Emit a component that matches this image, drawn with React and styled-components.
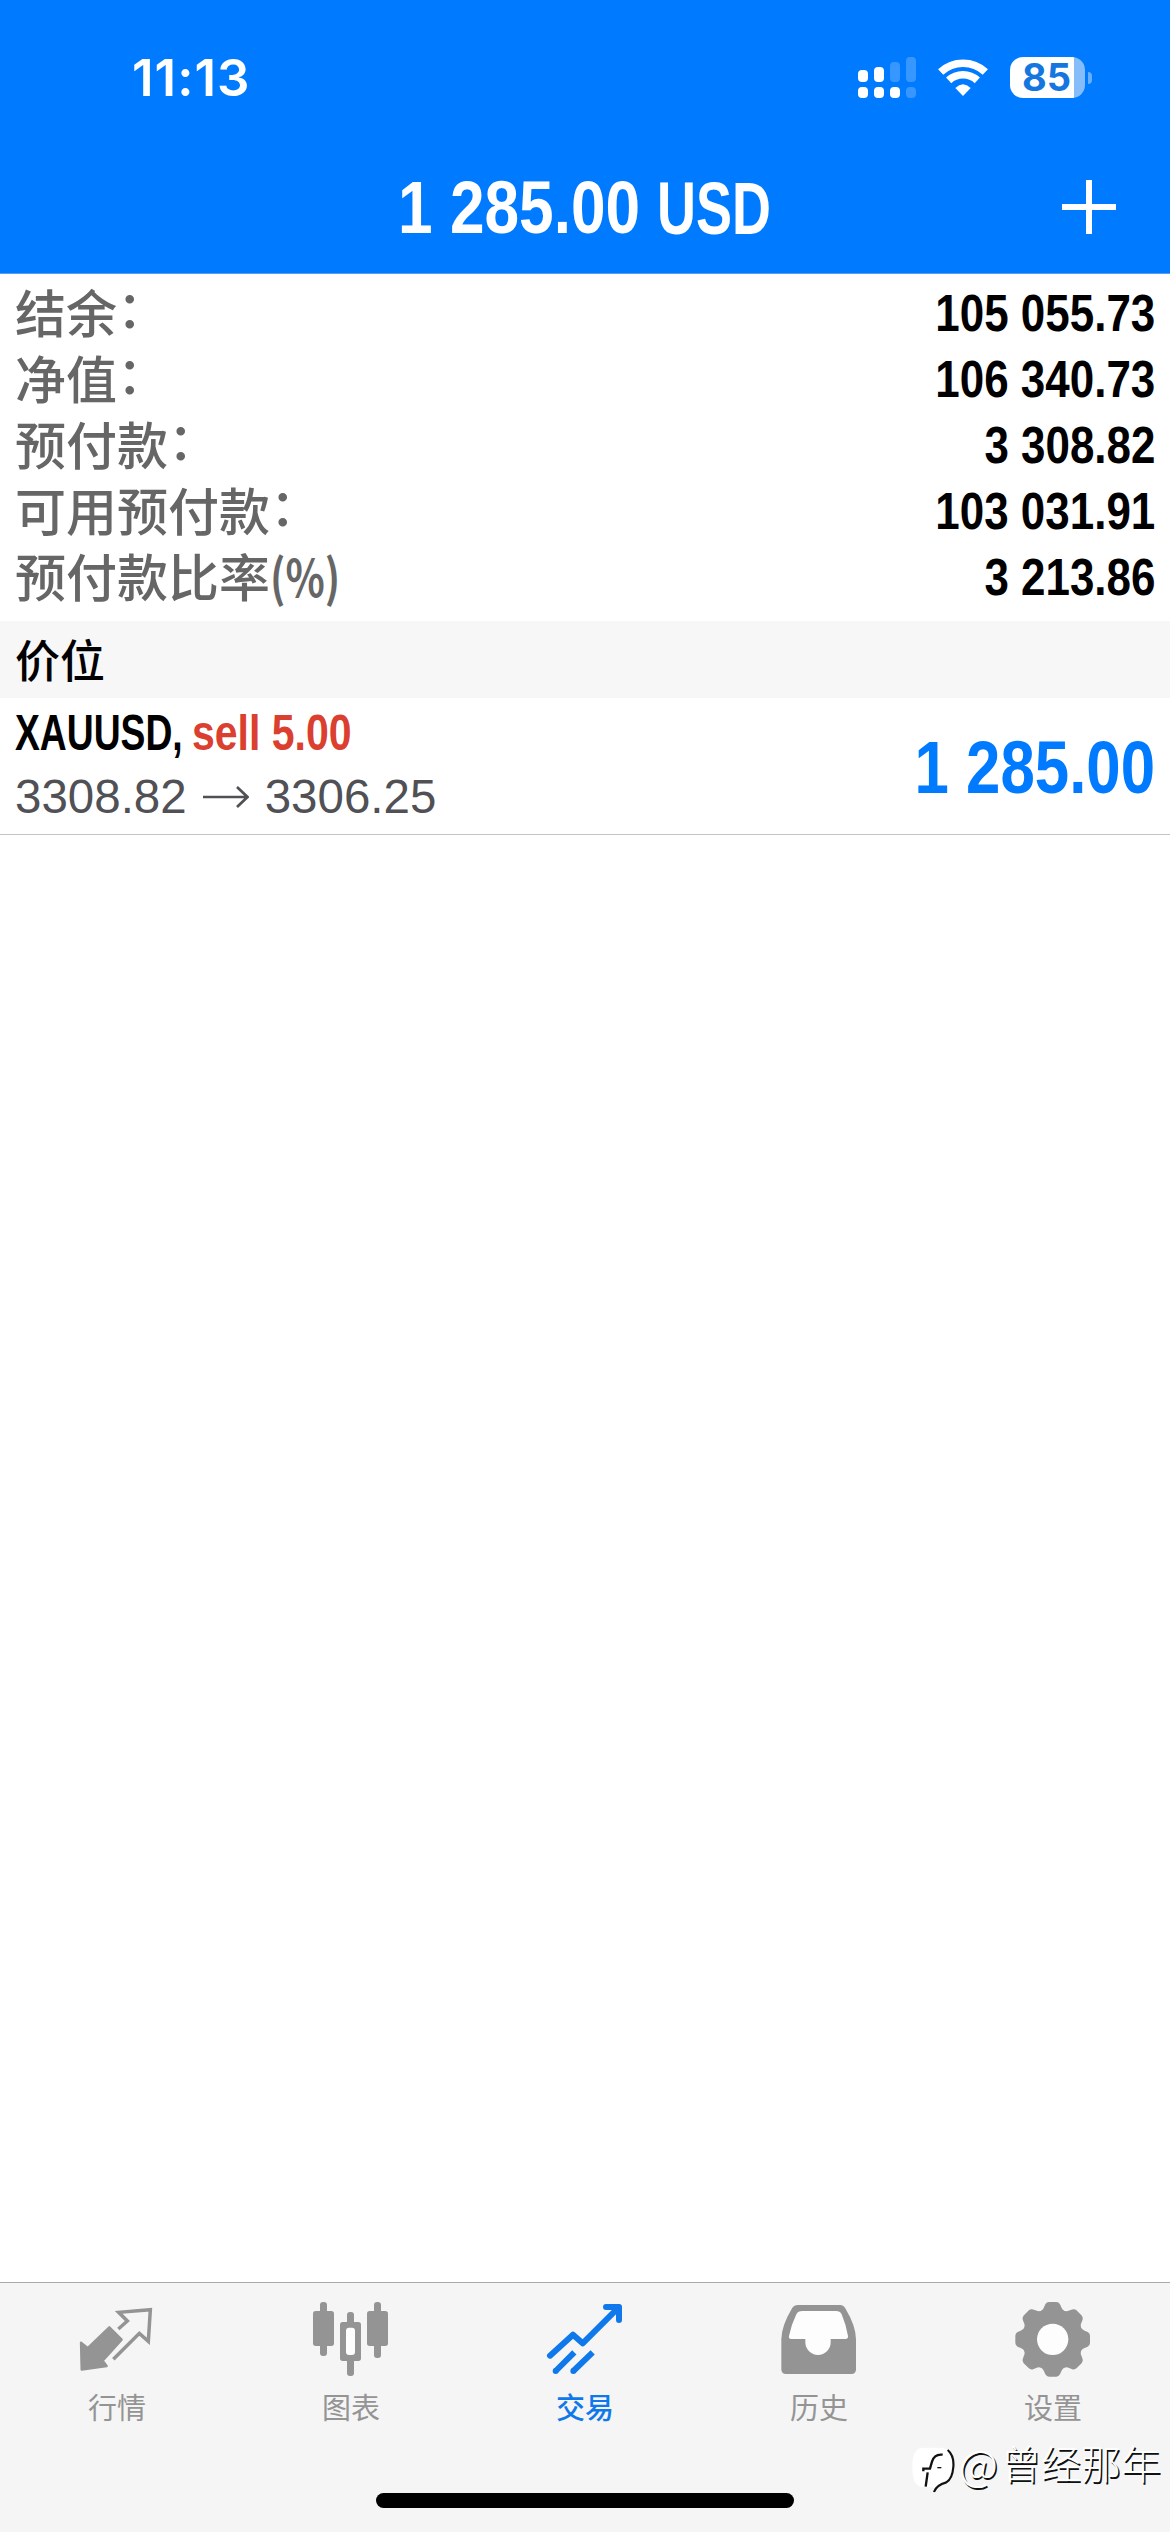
import styled, { createGlobalStyle } from "styled-components"

const account = [
    { label: "结余", colon: true, value: "105 055.73" },
    { label: "净值", colon: true, value: "106 340.73" },
    { label: "预付款", colon: true, value: "3 308.82" },
    { label: "可用预付款", colon: true, value: "103 031.91" },
    { label: "预付款比率", unit: "(%)", value: "3 213.86" },
]

const SignalIcon = () => (
    <svg width="58" height="41" viewBox="0 0 174 123" fill="#fff">
        <rect x="0" y="39" width="30" height="36" rx="12" />
        <rect x="48" y="30" width="30" height="45" rx="12" />
        <rect x="96" y="15" width="30" height="60" rx="12" opacity="0.22" />
        <rect x="144" y="0" width="30" height="75" rx="12" opacity="0.22" />
        <rect x="0" y="90" width="30" height="33" rx="12" />
        <rect x="48" y="90" width="30" height="33" rx="12" />
        <rect x="96" y="90" width="30" height="33" rx="12" />
        <rect x="144" y="90" width="30" height="33" rx="12" opacity="0.22" />
    </svg>
)

const WifiIcon = () => (
    <svg width="50" height="41" viewBox="0 0 150 123">
        <g fill="none" stroke="#fff" strokeWidth="23">
            <path d="M8 45A98.500 98.500 0 0 1 142 45" />
            <path d="M32 70A63.500 63.500 0 0 1 118 70" />
        </g>
        <path d="M75 117L52 93Q75 71 98 93Z" fill="#fff" />
    </svg>
)

const PlusIcon = () => (
    <svg width="54" height="54" viewBox="0 0 54 54">
        <path d="M27 0V54M0 27H54" stroke="#fff" strokeWidth="6" />
    </svg>
)

const ArrowIcon = () => (
    <svg width="46" height="22" viewBox="0 0 46 22" fill="none" stroke="#505055" strokeWidth="2.700">
        <path d="M0 11H44M34 1L44.500 11L34 21" />
    </svg>
)

const QuotesIcon = () => (
    <svg width="78" height="78" viewBox="0 0 234 234">
        <path
            d="M9 128L29 144L94 82L131 119L74 182L86 198L11 209Z"
            fill="currentColor"
            stroke="currentColor"
            strokeWidth="7"
            strokeLinejoin="round"
        />
        <path
            d="M121 87L148 63L122 37L217 29L211 124L184 100L106 178"
            fill="none"
            stroke="currentColor"
            strokeWidth="10.500"
        />
    </svg>
)

const ChartIcon = () => (
    <svg width="78" height="78" viewBox="0 0 234 234" fill="currentColor">
        <rect x="24" y="6" width="21" height="162" rx="9" />
        <rect x="3" y="33" width="63" height="105" rx="8" />
        <rect x="105" y="36" width="21" height="192" rx="9" />
        <rect x="84" y="66" width="63" height="117" rx="8" />
        <rect x="102" y="83" width="27" height="82" rx="9" fill="#fdfdfd" />
        <rect x="186" y="6" width="21" height="168" rx="9" />
        <rect x="165" y="33" width="63" height="105" rx="8" />
    </svg>
)

const TradeIcon = () => (
    <svg
        width="78"
        height="78"
        viewBox="0 0 234 234"
        fill="none"
        stroke="currentColor"
        strokeWidth="18"
    >
        <path d="M12 167L81 104L110 130L218 22" strokeLinecap="round" strokeLinejoin="round" />
        <path d="M180 21H219V60" strokeLinecap="round" strokeLinejoin="round" />
        <path d="M85 157L29 213M140 157L82 213" />
        <path d="M29 213h.1M82 213h.1" strokeLinecap="round" />
    </svg>
)

const HistoryIcon = () => (
    <svg width="78" height="78" viewBox="0 0 234 234">
        <path
            d="M52 15H182Q190 15 195 23Q228 78 228 118V208Q228 222 214 222H18Q4 222 4 208V118Q4 78 37 23Q42 15 52 15Z"
            fill="currentColor"
        />
        <path
            d="M67 33H168Q180 33 185 43Q198 74 204 108Q205 117 196 117H152V127A38 38 0 0 1 76 127V117H34Q25 117 27 108Q34 74 49 43Q54 33 67 33Z"
            fill="#fdfdfd"
        />
    </svg>
)

const SettingsIcon = () => (
    <svg width="78" height="78" viewBox="0 0 234 234">
        <g fill="currentColor">
            <circle cx="116" cy="118" r="90" />
            {[0, 45, 90, 135, 180, 225, 270, 315].map((angle) => (
                <path
                    key={angle}
                    transform={`rotate(${angle} 116 118)`}
                    d="M74 36Q87 32 90 22L94 13Q98 6 105 6H127Q134 6 138 13L142 22Q145 32 158 36Z"
                />
            ))}
        </g>
        <circle cx="116" cy="118" r="47" fill="#fdfdfd" />
    </svg>
)

const tabs = [
    { label: "行情", icon: <QuotesIcon /> },
    { label: "图表", icon: <ChartIcon /> },
    { label: "交易", icon: <TradeIcon />, active: true },
    { label: "历史", icon: <HistoryIcon /> },
    { label: "设置", icon: <SettingsIcon /> },
]

const WatermarkLogo = () => (
    <svg width="44" height="48" viewBox="0 0 132 144">
        <path d="M30 8H92Q128 14 126 60Q124 104 100 112L70 134L66 126H30Q4 120 4 66Q4 14 30 8Z" fill="#fff" />
        <g fill="none" stroke="#111">
            <path d="M110 15Q130 32 127 66Q124 102 106 112Q76 120 69 141" strokeWidth="6.500" />
            <path d="M95 29Q70 26 63 50L57 71H37V79M50 82L44 125" strokeWidth="7" />
            <path d="M79 68H91" strokeWidth="4" />
        </g>
    </svg>
)

export default function App() {
    return (
        <Screen>
            <GlobalStyle />
            <Header>
                <StatusBar>
                    <Time>11:13</Time>
                    <StatusIcons>
                        <SignalIcon />
                        <WifiIcon />
                        <BatteryGroup>
                            <Battery>85</Battery>
                            <BatteryTip />
                        </BatteryGroup>
                    </StatusIcons>
                </StatusBar>
                <TitleBar>
                    <span />
                    <Title>
                        <Condensed $size={74} $scale={0.84} $origin="right">1 285.00</Condensed>
                        <Condensed $size={75} $scale={0.72} $origin="left">USD</Condensed>
                    </Title>
                    <PlusIcon />
                </TitleBar>
            </Header>
            <Summary>
                {account.map((row) => (
                    <SummaryRow key={row.label}>
                        <SummaryLabel>
                            {row.label}
                            {row.colon && <Colon>：</Colon>}
                            {row.unit && <Unit>{row.unit}</Unit>}
                        </SummaryLabel>
                        <Condensed $size={52} $scale={0.845} $origin="right">{row.value}</Condensed>
                    </SummaryRow>
                ))}
            </Summary>
            <SectionHeader>价位</SectionHeader>
            <Position>
                <PositionInfo>
                    <Symbol>
                        <SymbolName>XAUUSD,</SymbolName>
                        <Side>sell 5.00</Side>
                    </Symbol>
                    <Prices>
                        3308.82
                        <ArrowIcon />
                        3306.25
                    </Prices>
                </PositionInfo>
                <Profit $size={74} $scale={0.835} $origin="right">1 285.00</Profit>
            </Position>
            <Blank />
            <TabBar>
                {tabs.map((tab) => (
                    <Tab key={tab.label} $active={tab.active}>
                        {tab.icon}
                        <p>{tab.label}</p>
                    </Tab>
                ))}
            </TabBar>
            <HomeIndicator />
            <Watermark>
                <WatermarkLogo />
                <p><At>@</At>曾经那年</p>
            </Watermark>
        </Screen>
    )
}

const GlobalStyle = createGlobalStyle`
    * {
        box-sizing: border-box;
        margin: 0;
        padding: 0;
    }
    body {
        background: #fff;
    }
    svg {
        display: block;
        flex-shrink: 0;
    }
`

const Screen = styled.div`
    position: relative;
    display: flex;
    flex-direction: column;
    width: 1170px;
    height: 2532px;
    overflow: hidden;
    background: #fff;
    font-family: "Liberation Sans", "Noto Sans CJK SC", sans-serif;
`

const Header = styled.header`
    height: 274px;
    background: #007aff;
    border-bottom: 1px solid #5a9df0;
    color: #fff;
`

const StatusBar = styled.div`
    display: flex;
    justify-content: space-between;
    height: 156px;
    padding: 57px 78px 0 132px;
`

const Time = styled.div`
    font-family: Inter, sans-serif;
    font-size: 51px;
    font-weight: 600;
    line-height: 42px;
    letter-spacing: 1px;
`

const StatusIcons = styled.div`
    display: flex;
    gap: 22px;
    height: 41px;
`

const BatteryGroup = styled.div`
    display: flex;
    align-items: center;
    gap: 3px;
`

const Battery = styled.div`
    width: 75px;
    height: 41px;
    border-radius: 13px;
    background: linear-gradient(to right, #fff 64px, #85bdfb 64px);
    color: #1576e0;
    font-family: Inter, sans-serif;
    font-size: 38px;
    font-weight: 700;
    line-height: 41px;
    text-indent: 12px;
`

const BatteryTip = styled.div`
    width: 4px;
    height: 12px;
    border-radius: 0 6px 6px 0;
    background: #66afff;
`

const TitleBar = styled.div`
    display: grid;
    grid-template-columns: 54px 1fr 54px;
    align-items: center;
    height: 101px;
    padding: 0 54px;
`

const Title = styled.h1`
    display: grid;
    grid-template-columns: 532px 1fr;
    column-gap: 17px;
    padding-top: 2px;
    line-height: 84px;
    > :first-child {
        justify-self: end;
    }
    > :last-child {
        justify-self: start;
    }
`

const Condensed = styled.span`
    font-size: ${(p) => p.$size}px;
    font-weight: 700;
    white-space: pre;
    transform: scaleX(${(p) => p.$scale});
    transform-origin: ${(p) => p.$origin} center;
`

const Summary = styled.section`
    padding: 6px 15px 11px;
`

const SummaryRow = styled.div`
    display: flex;
    justify-content: space-between;
    height: 66px;
    line-height: 66px;
`

const SummaryLabel = styled.span`
    display: flex;
    color: #666;
    font-family: "Noto Sans CJK SC", sans-serif;
    font-size: 51px;
    font-weight: 500;
    line-height: 62px;
`

const Colon = styled.span`
    transform: translateY(-5px);
`

const Unit = styled.span`
    font-weight: 700;
    transform: scaleX(0.8);
    transform-origin: left center;
`

const SectionHeader = styled.h2`
    height: 77px;
    padding-left: 15px;
    background: #f7f7f7;
    font-family: "Noto Sans CJK SC", sans-serif;
    font-size: 45px;
    font-weight: 500;
    line-height: 75px;
`

const Position = styled.section`
    display: flex;
    justify-content: space-between;
    align-items: center;
    height: 137px;
    padding: 0 15px;
    border-bottom: 1px solid #c4c4c6;
`

const PositionInfo = styled.div`
    display: flex;
    flex-direction: column;
    align-self: flex-start;
    padding-top: 2px;
`

const Symbol = styled.div`
    display: grid;
    grid-template-columns: 177px auto;
    height: 66px;
    font-size: 50px;
    font-weight: 700;
    line-height: 66px;
    white-space: pre;
`

const SymbolName = styled.span`
    transform: scaleX(0.745);
    transform-origin: left center;
`

const Side = styled.span`
    color: #da3f2f;
    transform: scaleX(0.82);
    transform-origin: left center;
`

const Prices = styled.div`
    display: flex;
    align-items: center;
    gap: 16px;
    color: #505055;
    font-size: 47.5px;
    line-height: 62px;
`

const Profit = styled(Condensed)`
    padding-top: 3px;
    color: #007aff;
`

const Blank = styled.div`
    flex: 1;
`

const TabBar = styled.nav`
    display: grid;
    grid-template-columns: repeat(5, 1fr);
    height: 211px;
    padding-top: 17px;
    border-top: 1px solid #a9a9a9;
    background: #f5f5f5;
`

const Tab = styled.div`
    display: flex;
    flex-direction: column;
    align-items: center;
    color: ${(p) => (p.$active ? "#0f78ea" : "#949494")};
    p {
        margin-top: 8px;
        font-family: "Noto Sans CJK SC", sans-serif;
        font-size: 29px;
        font-weight: ${(p) => (p.$active ? 500 : 400)};
        line-height: 40px;
    }
`

const HomeIndicator = styled.div`
    height: 39px;
    background: #f5f5f5;
    &::before {
        content: "";
        display: block;
        width: 418px;
        height: 15px;
        margin: 0 auto;
        border-radius: 8px;
        background: #000;
    }
`

/* floats over the tab bar */
const Watermark = styled.div`
    position: absolute;
    right: 9px;
    top: 2445px;
    display: flex;
    gap: 4px;
    color: #fff;
    p {
        display: flex;
        font-family: "Noto Sans CJK SC", sans-serif;
        font-size: 40px;
        font-weight: 300;
        line-height: 34px;
        text-shadow: 1.5px 1.5px 0.5px #111;
    }
`

const At = styled.span`
    font-size: 43px;
    margin-right: 3px;
`
